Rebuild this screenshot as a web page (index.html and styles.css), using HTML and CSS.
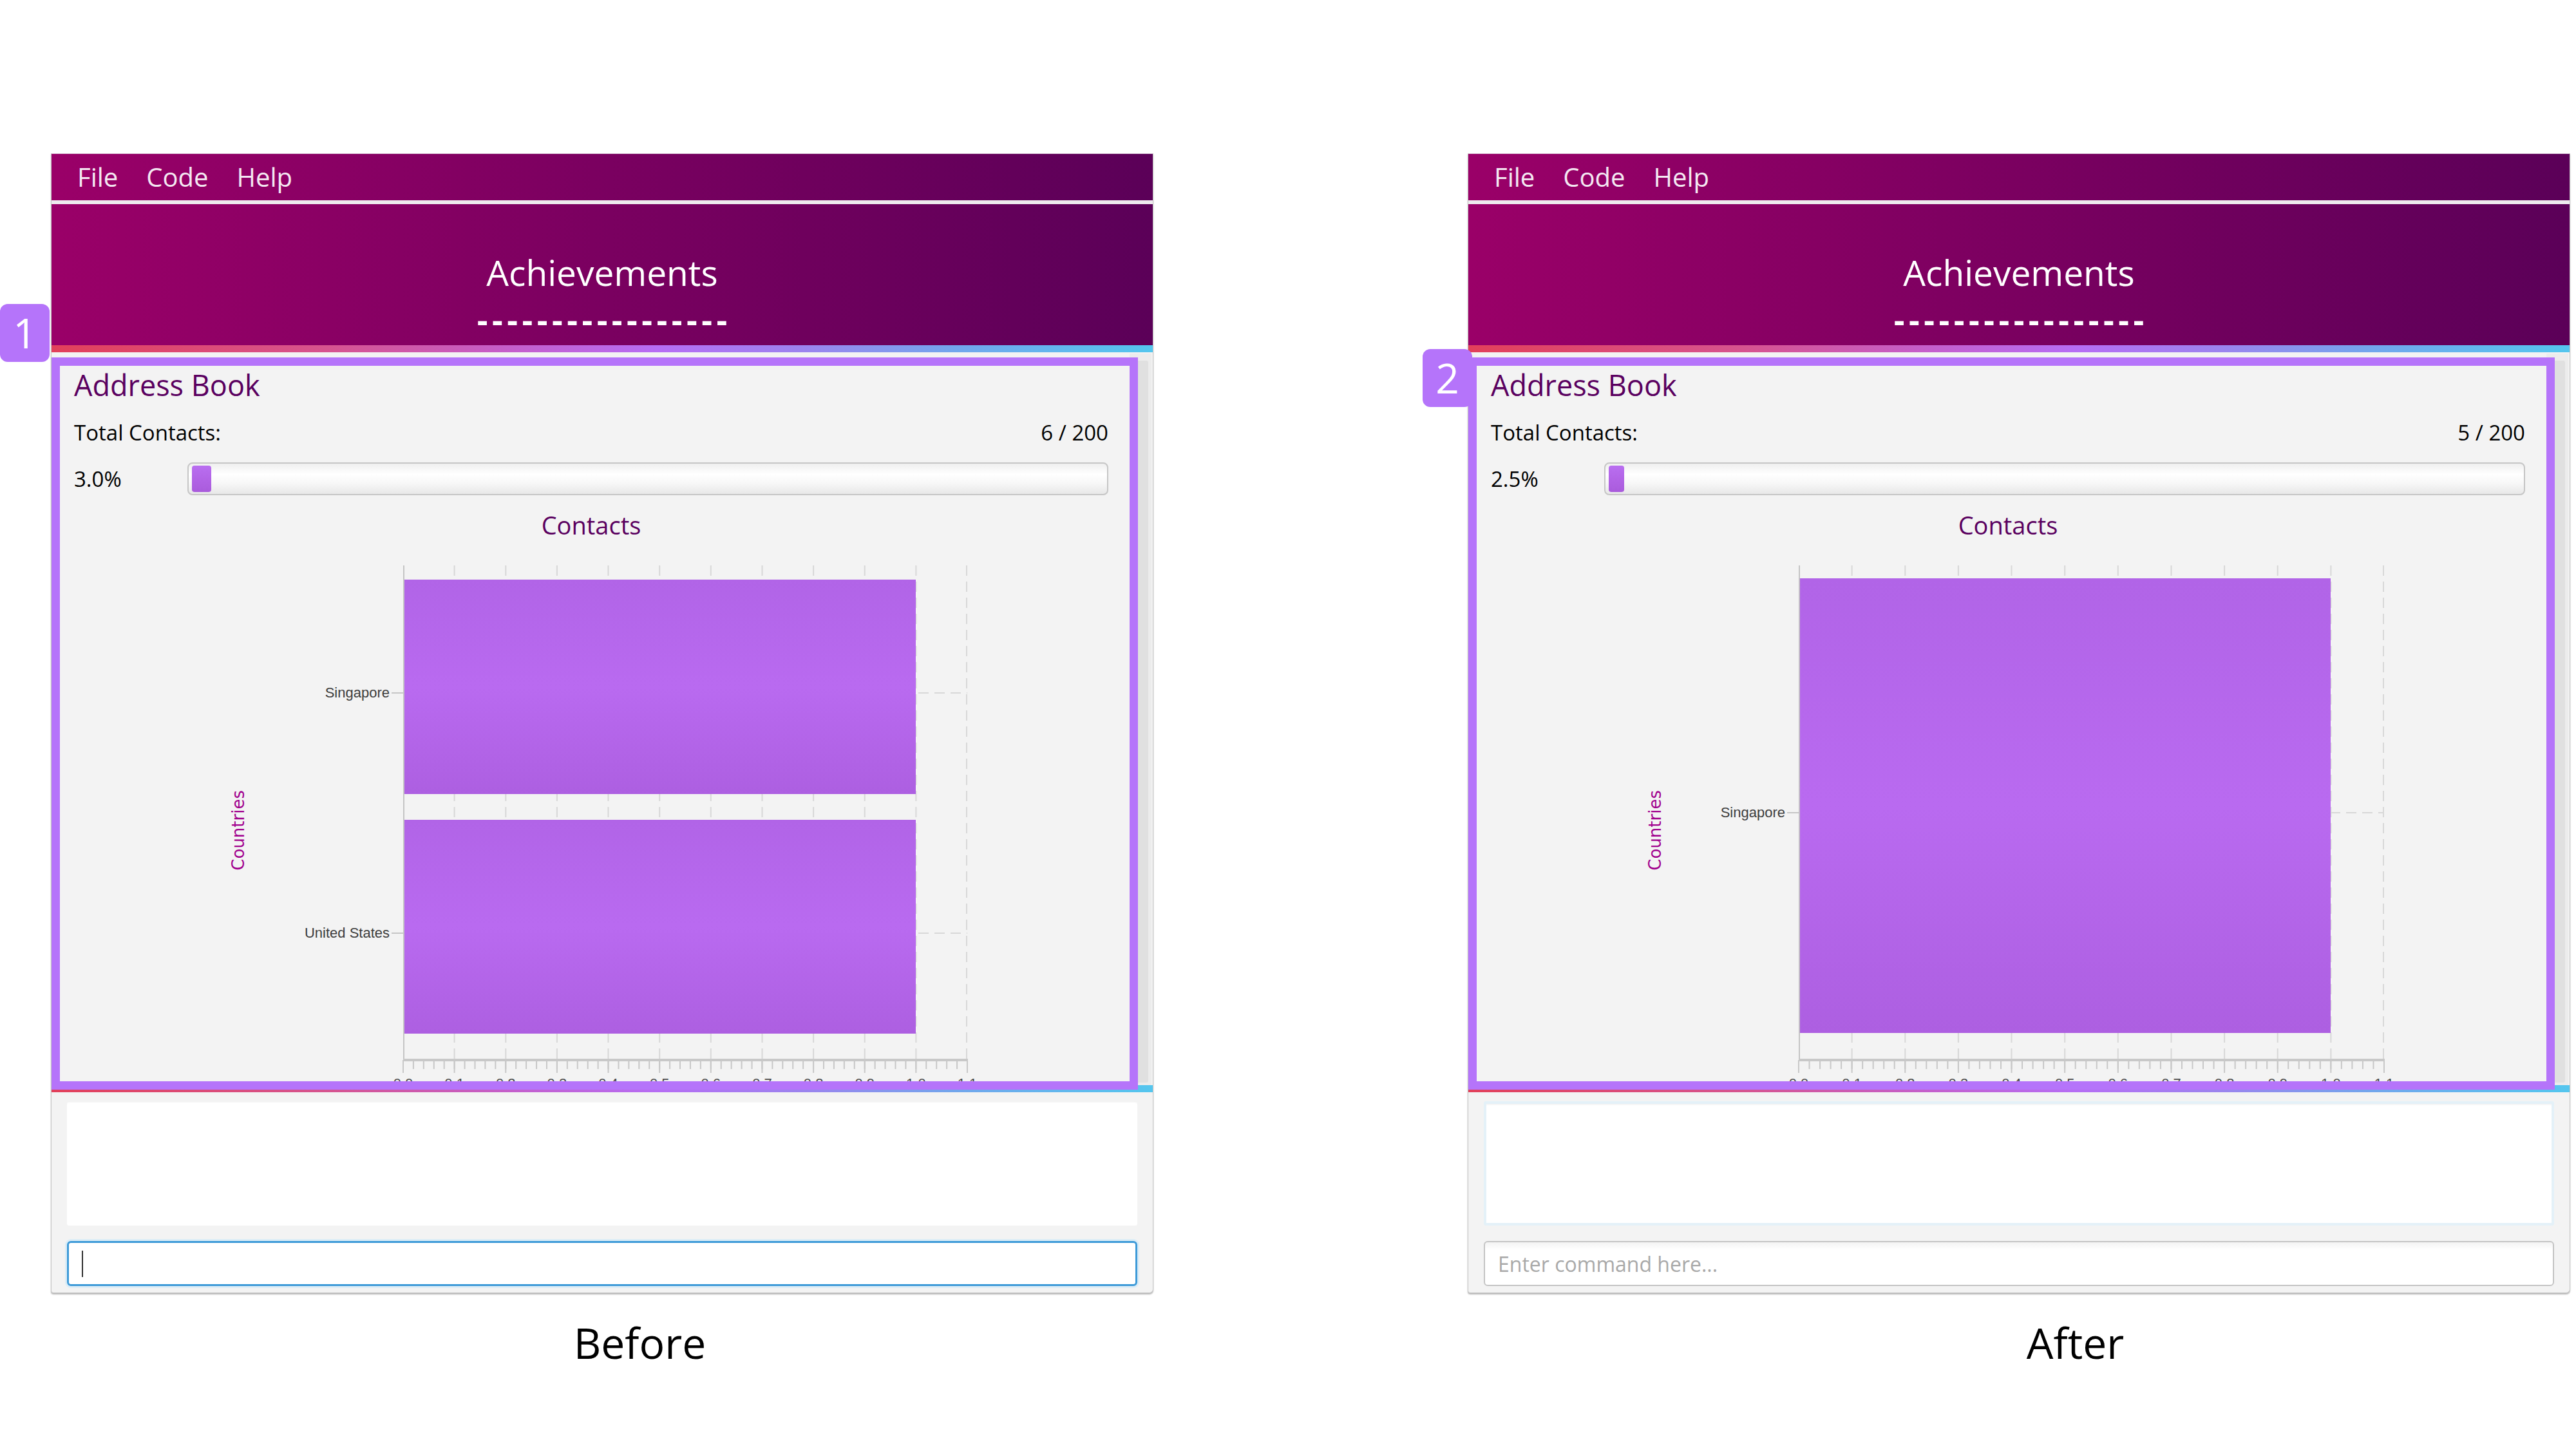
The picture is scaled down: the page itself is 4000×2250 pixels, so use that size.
FILE: index.html
```html
<!DOCTYPE html>
<html lang="en">

<head>
  <meta charset="UTF-8">
  <meta name="viewport" content="width=device-width, initial-scale=1.0">
  <title>Achievements | Before and After</title>
  <link rel="stylesheet" href="styles.css">
</head>

<body>

  <div class="compare">

    <div class="shot">
      <div class="window">
        <div class="menubar"><span>File</span><span>Code</span><span>Help</span></div>
        <div class="menu-sep"></div>
        <div class="header">
          <div class="header-title">Achievements</div>
          <div class="header-dash">-----------------</div>
        </div>
        <div class="stripe"></div>
        <div class="scroll">
          <div class="panel">
            <div class="panel-title">Address Book</div>
            <div class="count-row"><span>Total Contacts:</span><span>6 / 200</span></div>
            <div class="progress-row">
              <span class="pct">3.0%</span>
              <div class="progress"><div class="progress-fill" style="width:30px"></div></div>
            </div>
            <div class="chart-title">Contacts</div>
            <div class="chart">
              <div class="axis-name">Countries</div>
              <div class="cats">
                <div class="cat">Singapore</div>
                <div class="cat">United States</div>
              </div>
              <svg width="876" height="822" viewBox="0 0 876 822">
                <defs>
                  <linearGradient id="barA" x1="0" y1="0" x2="0" y2="1">
                    <stop offset="0" stop-color="#b164e7" />
                    <stop offset="0.5" stop-color="#b96af0" />
                    <stop offset="1" stop-color="#ad5fe1" />
                  </linearGradient>
                </defs>
                <g class="grid">
                  <line x1="79.6" y1="0" x2="79.6" y2="768" />
                  <line x1="159.3" y1="0" x2="159.3" y2="768" />
                  <line x1="238.9" y1="0" x2="238.9" y2="768" />
                  <line x1="318.5" y1="0" x2="318.5" y2="768" />
                  <line x1="398.2" y1="0" x2="398.2" y2="768" />
                  <line x1="477.8" y1="0" x2="477.8" y2="768" />
                  <line x1="557.5" y1="0" x2="557.5" y2="768" />
                  <line x1="637.1" y1="0" x2="637.1" y2="768" />
                  <line x1="716.7" y1="0" x2="716.7" y2="768" />
                  <line x1="796.4" y1="0" x2="796.4" y2="768" />
                  <line x1="875" y1="0" x2="875" y2="768" />
                  <line x1="0" y1="198" x2="876" y2="198" />
                  <line x1="0" y1="571" x2="876" y2="571" />
                </g>
                <rect x="1" y="22" width="795" height="333" fill="url(#barA)" />
                <rect x="1" y="395" width="795" height="332" fill="url(#barA)" />
                <line class="axis" x1="1" y1="0" x2="1" y2="768" />
                <line class="axis axis-x" x1="0" y1="768" x2="877" y2="768" />
                <line class="ticks" x1="-1" y1="775" x2="878" y2="775" stroke-width="14" stroke-dasharray="2 13.927" />
                <line class="ticks" x1="-1" y1="778" x2="878" y2="778" stroke-width="20" stroke-dasharray="2 77.636" />
                <g class="tick-labels">
                  <text x="0" y="812">0.0</text>
                  <text x="79.6" y="812">0.1</text>
                  <text x="159.3" y="812">0.2</text>
                  <text x="238.9" y="812">0.3</text>
                  <text x="318.5" y="812">0.4</text>
                  <text x="398.2" y="812">0.5</text>
                  <text x="477.8" y="812">0.6</text>
                  <text x="557.5" y="812">0.7</text>
                  <text x="637.1" y="812">0.8</text>
                  <text x="716.7" y="812">0.9</text>
                  <text x="796.4" y="812">1.0</text>
                  <text x="876" y="812">1.1</text>
                </g>
              </svg>
            </div>
          </div>
          <div class="scrollbar"><div class="thumb"></div></div>
        </div>
        <div class="stripe"></div>
        <div class="result"></div>
        <div class="command command-focus"><span class="caret"></span></div>
        <div class="highlight"></div>
        <div class="badge badge-one">1</div>
      </div>
      <div class="caption caption-before">Before</div>
    </div>

    <div class="shot">
      <div class="window">
        <div class="menubar"><span>File</span><span>Code</span><span>Help</span></div>
        <div class="menu-sep"></div>
        <div class="header">
          <div class="header-title">Achievements</div>
          <div class="header-dash">-----------------</div>
        </div>
        <div class="stripe"></div>
        <div class="scroll">
          <div class="panel">
            <div class="panel-title">Address Book</div>
            <div class="count-row"><span>Total Contacts:</span><span>5 / 200</span></div>
            <div class="progress-row">
              <span class="pct">2.5%</span>
              <div class="progress"><div class="progress-fill" style="width:24px"></div></div>
            </div>
            <div class="chart-title">Contacts</div>
            <div class="chart">
              <div class="axis-name">Countries</div>
              <div class="cats">
                <div class="cat">Singapore</div>
              </div>
              <svg width="909" height="822" viewBox="0 0 909 822">
                <defs>
                  <linearGradient id="barB" x1="0" y1="0" x2="0" y2="1">
                    <stop offset="0" stop-color="#b164e7" />
                    <stop offset="0.5" stop-color="#b96af0" />
                    <stop offset="1" stop-color="#ad5fe1" />
                  </linearGradient>
                </defs>
                <g class="grid">
                  <line x1="82.6" y1="0" x2="82.6" y2="768" />
                  <line x1="165.3" y1="0" x2="165.3" y2="768" />
                  <line x1="247.9" y1="0" x2="247.9" y2="768" />
                  <line x1="330.5" y1="0" x2="330.5" y2="768" />
                  <line x1="413.2" y1="0" x2="413.2" y2="768" />
                  <line x1="495.8" y1="0" x2="495.8" y2="768" />
                  <line x1="578.5" y1="0" x2="578.5" y2="768" />
                  <line x1="661.1" y1="0" x2="661.1" y2="768" />
                  <line x1="743.7" y1="0" x2="743.7" y2="768" />
                  <line x1="826.4" y1="0" x2="826.4" y2="768" />
                  <line x1="908" y1="0" x2="908" y2="768" />
                  <line x1="0" y1="384" x2="909" y2="384" />
                </g>
                <rect x="1" y="20" width="825" height="706" fill="url(#barB)" />
                <line class="axis" x1="1" y1="0" x2="1" y2="768" />
                <line class="axis axis-x" x1="0" y1="768" x2="910" y2="768" />
                <line class="ticks" x1="-1" y1="775" x2="911" y2="775" stroke-width="14" stroke-dasharray="2 14.527" />
                <line class="ticks" x1="-1" y1="778" x2="911" y2="778" stroke-width="20" stroke-dasharray="2 80.636" />
                <g class="tick-labels">
                  <text x="0" y="812">0.0</text>
                  <text x="82.6" y="812">0.1</text>
                  <text x="165.3" y="812">0.2</text>
                  <text x="247.9" y="812">0.3</text>
                  <text x="330.5" y="812">0.4</text>
                  <text x="413.2" y="812">0.5</text>
                  <text x="495.8" y="812">0.6</text>
                  <text x="578.5" y="812">0.7</text>
                  <text x="661.1" y="812">0.8</text>
                  <text x="743.7" y="812">0.9</text>
                  <text x="826.4" y="812">1.0</text>
                  <text x="909" y="812">1.1</text>
                </g>
              </svg>
            </div>
          </div>
          <div class="scrollbar"><div class="thumb"></div></div>
        </div>
        <div class="stripe"></div>
        <div class="result result-framed"></div>
        <div class="command command-idle">Enter command here...</div>
        <div class="highlight"></div>
        <div class="badge badge-two">2</div>
      </div>
      <div class="caption caption-after">After</div>
    </div>

  </div>

</body>

</html>
```

FILE: styles.css
```css
* {
  box-sizing: border-box;
}

html {
  background-color: #fff;
}

body {
  margin: 0;
  font-family: "Open Sans", "Noto Sans", sans-serif;
  color: #000;
}

.compare {
  display: flex;
  gap: 488px;
  padding: 238px 0 0 79px;
}

.shot {
  width: 1712px;
}

/* application window */

.window {
  position: relative;
  background: #f3f3f3;
  border: 1px solid #c6c6c6;
  border-top-color: #e2d2e0;
  border-radius: 0 0 6px 4px;
  box-shadow: 0 2px 2px rgba(0, 0, 0, .28);
}

.menubar {
  display: flex;
  align-items: center;
  height: 72px;
  padding-left: 18px;
  background: linear-gradient(90deg, #9a0068, #5b0058);
  color: #f4e8f2;
  font-size: 40px;
}

.menubar span {
  padding: 0 22px;
  line-height: 72px;
}

.menu-sep {
  height: 6px;
  background: #eeeaee;
}

.header {
  height: 219px;
  padding-top: 68px;
  background: linear-gradient(90deg, #9a0068, #5b0058);
  color: #fff;
  text-align: center;
}

.header-title {
  font-size: 55px;
  line-height: 75px;
}

.header-dash {
  font-size: 52px;
  font-weight: 700;
  line-height: 71px;
  letter-spacing: 6.5px;
  text-indent: 6.5px;
}

.stripe {
  height: 11px;
  background: linear-gradient(90deg, #e2405a 0%, #d6548f 25%, #c45fcc 42%, #b66df4 55%, #9c83ee 68%, #72a6ec 82%, #54c6ee 100%);
}

/* scrolling stats panel */

.scroll {
  display: flex;
  height: 1138px;
}

.panel {
  flex: 1;
  min-width: 0;
  overflow: hidden;
  padding: 21px 33px 0 35px;
}

.scrollbar {
  width: 34px;
  margin: 2px 2px 0 0;
  padding: 11px 5px 4px;
  background: #ececec;
}

.thumb {
  height: 100%;
  border-radius: 3px;
  background: #e0e0e0;
}

.panel-title {
  font-size: 45px;
  line-height: 60px;
  color: #5a005f;
}

.count-row {
  display: flex;
  justify-content: space-between;
  margin-top: 22px;
  font-size: 33px;
  line-height: 44px;
}

.progress-row {
  display: flex;
  align-items: center;
  height: 51px;
  margin-top: 24px;
  font-size: 33px;
}

.pct {
  width: 176px;
  line-height: 44px;
}

.progress {
  flex: 1;
  height: 51px;
  padding: 3px 5px;
  border: 2px solid #c6c6c6;
  border-radius: 8px;
  background: linear-gradient(#efefef, #fff 35%, #f7f7f7 65%, #e8e8e8);
}

.progress-fill {
  height: 100%;
  border-radius: 4px;
  background: linear-gradient(#b96ef0, #b264e6 50%, #a95bdc);
}

.chart-title {
  margin-top: 21px;
  text-align: center;
  font-size: 38px;
  line-height: 50px;
  color: #5a005f;
}

/* bar chart */

.chart {
  display: grid;
  grid-template-columns: 30px 1fr auto;
  grid-template-rows: 768px 54px;
  margin-top: 38px;
  padding: 0 219px 0 240px;
}

.axis-name {
  grid-row: 1 / 3;
  align-self: center;
  justify-self: center;
  writing-mode: vertical-rl;
  transform: rotate(180deg);
  font-family: "DejaVu Sans", sans-serif;
  font-size: 26px;
  line-height: 30px;
  color: #a1008d;
}

.cats {
  display: flex;
  flex-direction: column;
  padding: 11px 0;
  font-family: "Liberation Sans", sans-serif;
  font-size: 22px;
  color: #3d3d3d;
}

.cat {
  flex: 1;
  display: flex;
  align-items: center;
  justify-content: flex-end;
}

.cat::after {
  content: "";
  width: 18px;
  height: 2px;
  margin-left: 3px;
  background: #c6c6c6;
}

.chart svg {
  grid-row: 1 / 3;
  grid-column: 3;
  display: block;
  overflow: visible;
}

.grid line {
  stroke: #d8d8d8;
  stroke-width: 2;
  stroke-dasharray: 16 9;
}

.axis {
  stroke: #c4c4c4;
  stroke-width: 2;
}

.axis-x {
  stroke: #c8c8c8;
  stroke-width: 4;
}

.ticks {
  stroke: #c8c8c8;
}

.tick-labels text {
  font-family: "Liberation Sans", sans-serif;
  font-size: 22px;
  fill: #4a4a4a;
  text-anchor: middle;
}

/* result and command boxes */

.result {
  height: 193px;
  margin: 14px 24px 0;
  border-radius: 3px;
  background: #fff;
  box-shadow: inset 0 3px 3px -2px rgba(0, 0, 0, .08);
}

.result-framed {
  border: 4px solid #e4f1f8;
}

.command {
  display: flex;
  align-items: center;
  height: 70px;
  margin: 24px 24px 10px;
  padding-left: 20px;
  border-radius: 6px;
  background: #fff;
  font-size: 32px;
}

.command-focus {
  border: 3px solid #3d9ad8;
  box-shadow: 0 0 0 3px #dcedf7;
}

.caret {
  width: 2px;
  height: 41px;
  background: #333;
}

.command-idle {
  border: 2px solid #c5c5c5;
  background: linear-gradient(#f3f3f3, #fff 12px);
  color: #a9a9a9;
}

/* annotations drawn over the screenshot */

.highlight {
  position: absolute;
  left: 0;
  top: 316px;
  width: 1687px;
  height: 1137px;
  border: 13px solid #b574fa;
  pointer-events: none;
}

.badge {
  position: absolute;
  display: flex;
  align-items: center;
  justify-content: center;
  width: 77px;
  height: 90px;
  border-radius: 12px;
  background: #b574fa;
  color: #fff;
  font-size: 64px;
  line-height: 1;
}

.badge-one {
  left: -80px;
  top: 233px;
}

.badge-two {
  left: -71px;
  top: 303px;
}

.caption {
  margin-top: 31px;
  text-align: center;
  font-size: 66px;
  line-height: 90px;
}

.caption-before {
  padding-left: 117px;
}

.caption-after {
  padding-left: 175px;
}
```
